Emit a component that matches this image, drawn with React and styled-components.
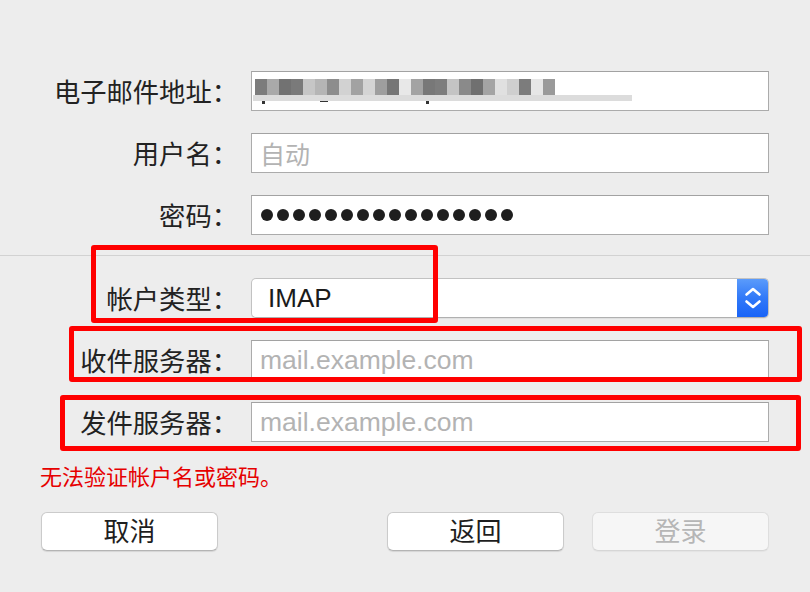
import styled, { createGlobalStyle } from 'styled-components';

const GlobalStyle = createGlobalStyle`
  html, body {
    margin: 0;
    padding: 0;
    background: #ededed;
  }
  * {
    box-sizing: border-box;
  }
`;

const CJK = `"Noto Sans CJK SC", "Noto Sans", sans-serif`;
const LATIN = `"Liberation Sans", "Noto Sans CJK SC", Arial, sans-serif`;

// pixelated email address (it is blurred in the screenshot)
const MOSAIC = [
  '#7c7c7c', '#a9a9a9', '#727272', '#7a7a7a', '#c6c6c6', '#b5b5b5', '#8d8d8d',
  '#d2d2d2', '#a2a2a2', '#d4d4d4', '#9e9e9e', '#767676', '#e8e8e8', '#a3a3a3',
  '#787878', '#7d7d7d', '#c4c4c4', '#8a8a8a', '#707070', '#a4a4a4', '#e0e0e0',
  '#cfcfcf', '#7c7c7c', '#e6e6e6', '#9a9a9a',
];

const App = () => {
  return (
    <Page>
      <GlobalStyle />
      <Form>
        <Label>电子邮件地址：</Label>
        <Field>
          <Blurred>
            <Mosaic>
              {MOSAIC.map((c, i) => (
                <Pixel key={i} style={{ background: c }} />
              ))}
            </Mosaic>
            <Smear />
            <Specks>
              <Speck />
              <Speck wide />
              <Speck />
            </Specks>
          </Blurred>
        </Field>

        <Label>用户名：</Label>
        <Field>
          <Placeholder>自动</Placeholder>
        </Field>

        <Label>密码：</Label>
        <Field>
          <Dots>
            {Array.from({ length: 16 }).map((_, i) => (
              <Dot key={i} />
            ))}
          </Dots>
        </Field>
      </Form>

      <Divider />

      <Form>
        <Label>帐户类型：</Label>
        <Select>
          <SelectValue>IMAP</SelectValue>
          <Stepper>
            <svg width="18" height="24" viewBox="0 0 18 24" fill="none">
              <path d="M2.5 8.5 L9 3 L15.5 8.5" stroke="#fff" strokeWidth="2.6" strokeLinecap="round" strokeLinejoin="round" />
              <path d="M2.5 15.5 L9 21 L15.5 15.5" stroke="#fff" strokeWidth="2.6" strokeLinecap="round" strokeLinejoin="round" />
            </svg>
          </Stepper>
        </Select>

        <Label>收件服务器：</Label>
        <Field>
          <Placeholder latin>mail.example.com</Placeholder>
        </Field>

        <Label>发件服务器：</Label>
        <Field>
          <Placeholder latin>mail.example.com</Placeholder>
        </Field>
      </Form>

      <ErrorText>无法验证帐户名或密码。</ErrorText>

      <ButtonBar>
        <Button>取消</Button>
        <ButtonGroup>
          <Button>返回</Button>
          <Button disabled>登录</Button>
        </ButtonGroup>
      </ButtonBar>

      {/* red annotation boxes drawn over the dialog */}
      <Mark style={{ left: 91, top: 245, width: 347, height: 78 }} />
      <Mark style={{ left: 69, top: 326, width: 733, height: 56 }} />
      <Mark style={{ left: 60, top: 395, width: 741, height: 56 }} />
    </Page>
  );
};

export default App;

const Page = styled.div`
  position: relative;
  width: 810px;
  height: 592px;
  padding-top: 71px;
  background: #ededed;
  overflow: hidden;
`;

const Form = styled.div`
  display: grid;
  grid-template-columns: 238px 1fr;
  grid-auto-rows: 40px;
  column-gap: 13px;
  row-gap: 22px;
  padding-right: 41px;
  align-items: center;
`;

const Label = styled.div`
  font-family: ${CJK};
  font-size: 26.3px;
  line-height: 36px;
  color: #222;
  text-align: right;
  white-space: nowrap;
`;

const Field = styled.div`
  height: 40px;
  display: flex;
  align-items: center;
  padding: 0 8px;
  background: #fff;
  border: 1px solid #ababab;
  border-top-color: #a2a2a2;
`;

const Placeholder = styled.span`
  font-family: ${(p) => (p.latin ? LATIN : CJK)};
  font-size: ${(p) => (p.latin ? 26.5 : 25)}px;
  color: #b3b3b3;
  line-height: 1;
`;

const Blurred = styled.div`
  display: flex;
  flex-direction: column;
  align-self: stretch;
  padding-top: 7px;
  margin-left: -7px;
  filter: blur(0.5px);
`;

const Mosaic = styled.div`
  display: flex;
  height: 16px;
  padding-left: 2px;
`;

const Pixel = styled.div`
  width: 12px;
  height: 16px;
`;

const Smear = styled.div`
  width: 379px;
  height: 6px;
  background: #dcdcdc;
`;

const Specks = styled.div`
  display: flex;
  height: 3px;
  padding-left: 9px;
`;

const Speck = styled.div`
  width: ${(p) => (p.wide ? 8 : 3)}px;
  height: ${(p) => (p.wide ? 1 : 3)}px;
  background: #333;
  margin-right: ${(p) => (p.wide ? 98 : 55)}px;
`;

const Dots = styled.div`
  display: flex;
  gap: 4px;
  padding-left: 1px;
`;

const Dot = styled.span`
  width: 12px;
  height: 12px;
  border-radius: 50%;
  background: #1e1e1e;
`;

const Divider = styled.div`
  height: 1px;
  margin: 20px 0 22px;
  background: #d2d2d2;
`;

const Select = styled.div`
  height: 40px;
  display: flex;
  align-items: stretch;
  background: #fff;
  border: 1px solid #c2c2c2;
  border-bottom-color: #b0b0b0;
  border-radius: 5px;
  box-shadow: 0 1px 1px rgba(0, 0, 0, 0.06);
  overflow: hidden;
`;

const SelectValue = styled.div`
  flex: 1;
  display: flex;
  align-items: center;
  padding-left: 16px;
  font-family: ${LATIN};
  font-size: 26px;
  color: #1b1b1b;
`;

const Stepper = styled.div`
  width: 32px;
  margin: -1px -1px -1px 0;
  display: flex;
  align-items: center;
  justify-content: center;
  background: linear-gradient(180deg, #5d9dfb 0%, #3179f8 50%, #1762f7 100%);
`;

const ErrorText = styled.div`
  margin-top: 21px;
  padding-left: 40px;
  font-family: ${CJK};
  font-size: 22px;
  line-height: 24px;
  color: #e60000;
`;

const ButtonBar = styled.div`
  display: flex;
  justify-content: space-between;
  margin-top: 25px;
  padding: 0 41px;
`;

const ButtonGroup = styled.div`
  display: flex;
  gap: 28px;
`;

const Button = styled.button`
  width: 177px;
  height: 39px;
  padding: 0 0 3px;
  font-family: ${CJK};
  font-size: 26px;
  line-height: 1;
  color: ${(p) => (p.disabled ? '#b6b6b6' : '#1e1e1e')};
  background: ${(p) => (p.disabled ? '#f6f6f6' : '#fff')};
  border: 1px solid ${(p) => (p.disabled ? '#dedede' : '#cbcbcb')};
  border-bottom-color: ${(p) => (p.disabled ? '#d6d6d6' : '#b4b4b4')};
  border-radius: 6px;
  box-shadow: 0 1px 1px rgba(0, 0, 0, ${(p) => (p.disabled ? 0.04 : 0.1)});
`;

const Mark = styled.div`
  position: absolute;
  border: 5px solid #ff0000;
  border-radius: 3px;
  pointer-events: none;
`;
